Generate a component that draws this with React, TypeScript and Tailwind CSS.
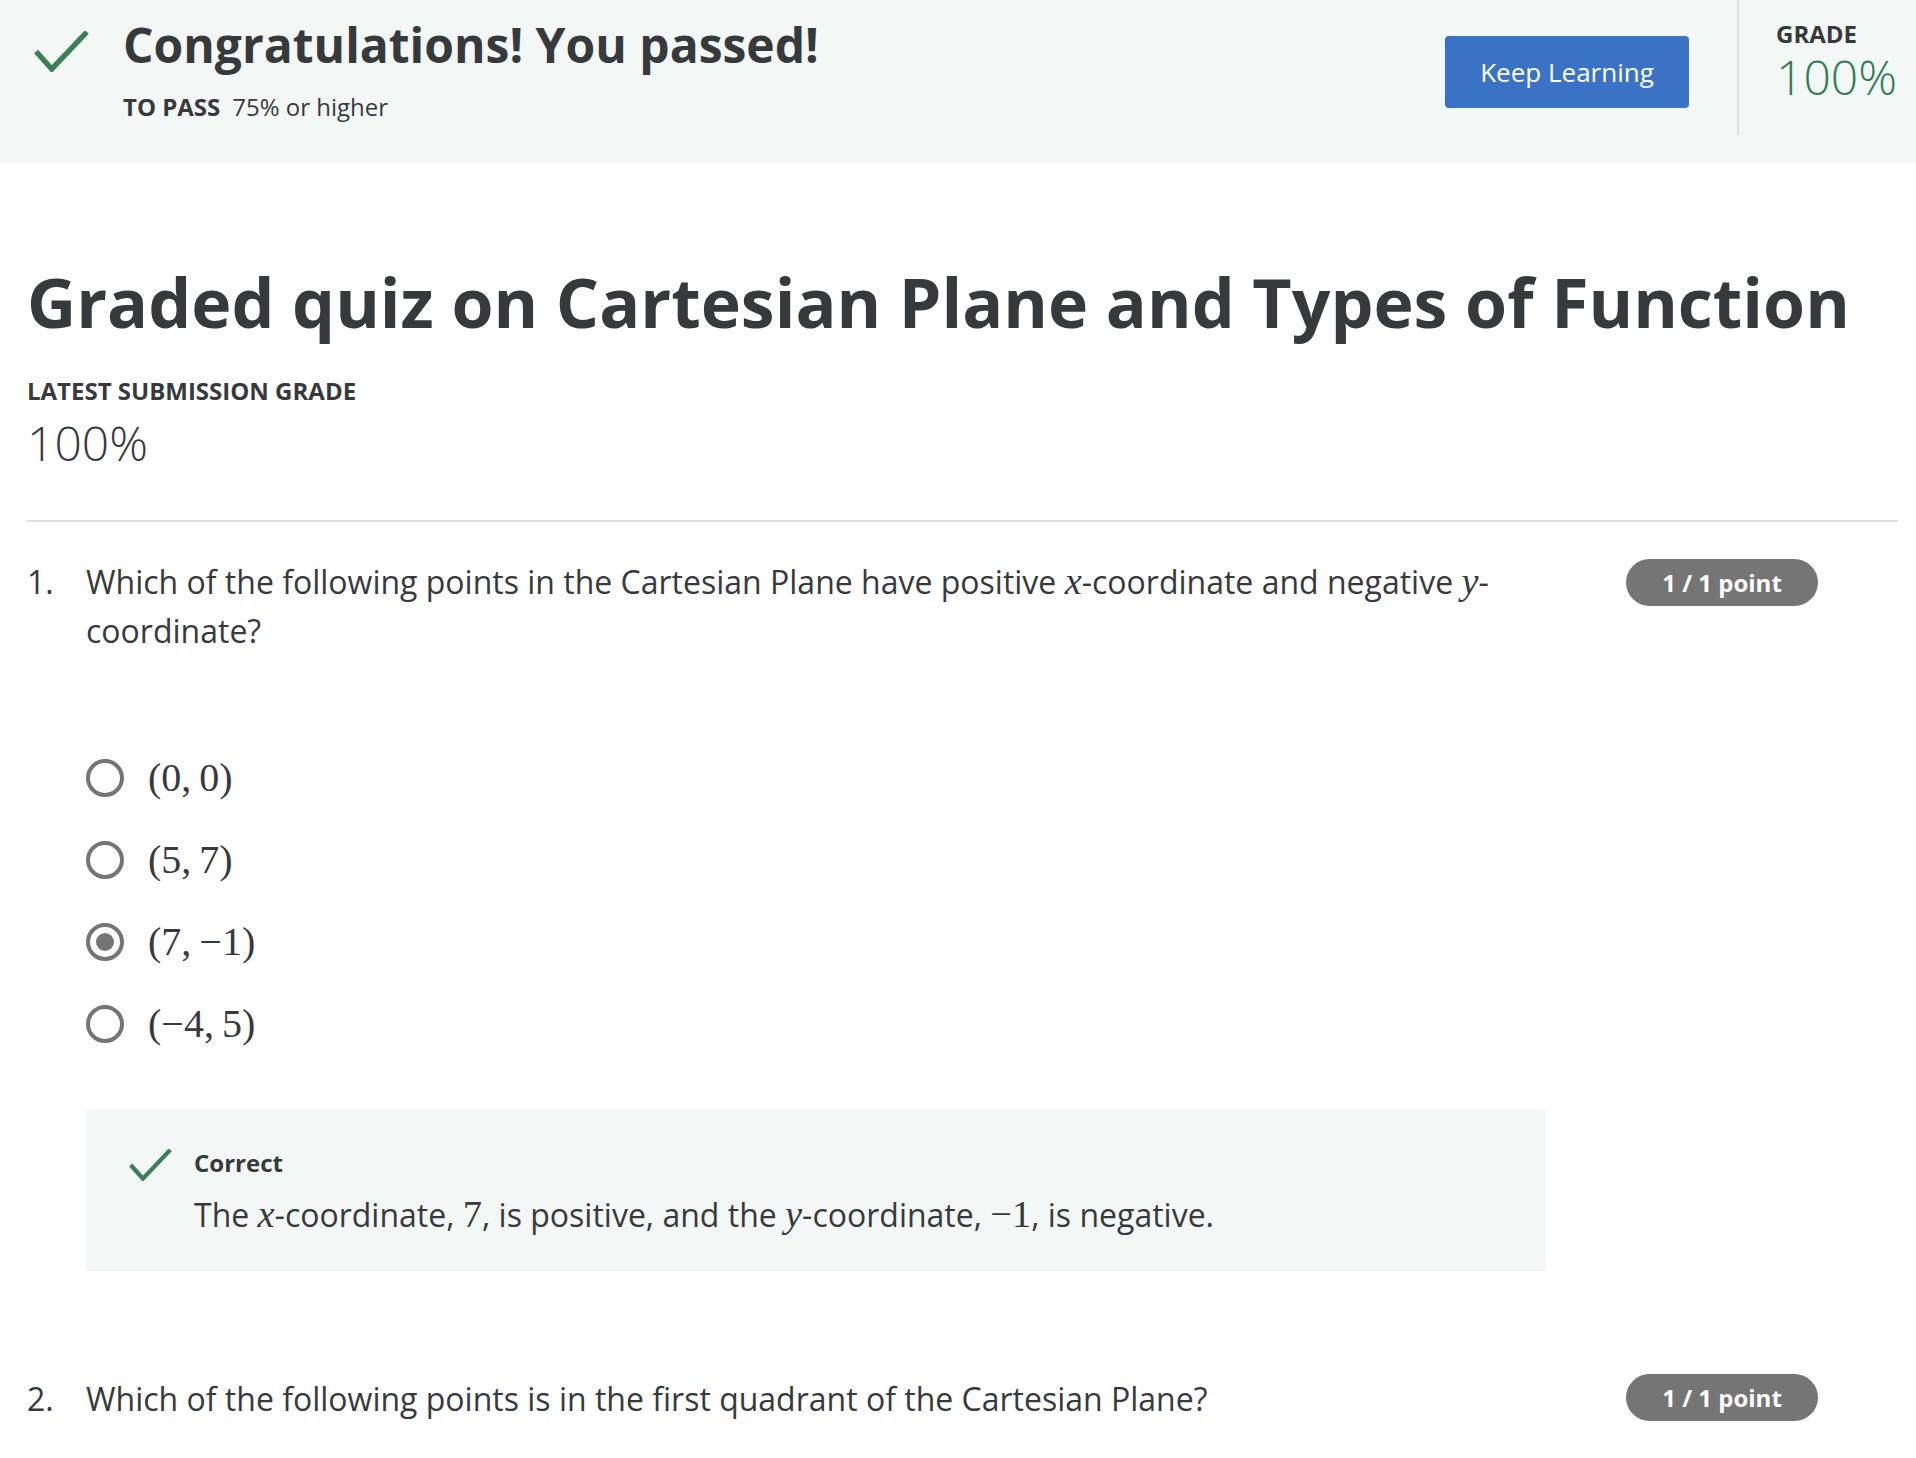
import React from "react";

const M = ({ children, i }: { children: React.ReactNode; i?: boolean }) => (
  <span className={"font-['Liberation_Serif',serif] text-[1.2em] leading-none " + (i ? "italic" : "")}>{children}</span>
);

function Check({ className }: { className?: string }) {
  return (
    <svg className={className} viewBox="0 0 56 42" fill="none">
      <path d="M2 21 L18 39 L54 1" stroke="#3a7f55" strokeWidth="5.5" />
    </svg>
  );
}

function Pill() {
  return (
    <div className="flex h-[47px] w-[192px] shrink-0 items-center justify-center rounded-full bg-[#757575] text-[24px] font-bold text-white">
      1 / 1 point
    </div>
  );
}

function Radio({ checked }: { checked?: boolean }) {
  return (
    <div className="flex h-[38px] w-[38px] shrink-0 items-center justify-center rounded-full border-[4px] border-[#757575]">
      {checked && <div className="h-[18px] w-[18px] rounded-full bg-[#757575]" />}
    </div>
  );
}

export default function App() {
  const options: { label: React.ReactNode; checked?: boolean }[] = [
    { label: "(0,\u20090)" },
    { label: "(5,\u20097)" },
    { label: "(7,\u2009\u22121)", checked: true },
    { label: "(\u22124,\u20095)" },
  ];
  return (
    <div className="min-h-[1458px] w-[1916px] bg-white font-['Open_Sans',sans-serif] text-[#373a3c]">
      <header className="flex h-[163px] bg-[#f3f8f6]">
        <div className="flex items-start pl-[34px]">
          <Check className="mt-[31px] h-[41px] w-[55px]" />
          <div className="ml-[34px] pt-[17px]">
            <h1 className="text-[48px] font-bold leading-[56px]">Congratulations! You passed!</h1>
            <div className="mt-[20px] text-[24px] leading-[28px]">
              <span className="font-bold">TO PASS</span>
              <span className="ml-[12px]">75% or higher</span>
            </div>
          </div>
        </div>
        <div className="flex-1" />
        <div className="pt-[36px]">
          <button className="flex h-[72px] w-[244px] items-center justify-center rounded-[4px] bg-[#3a73c6] text-[26px] text-white">
            Keep Learning
          </button>
        </div>
        <div className="ml-[48px] h-[135px] w-[2px] bg-[#e1e1e1]" />
        <div className="ml-[37px] w-[140px] pt-[19px]">
          <div className="text-[24px] font-bold leading-[30px]">GRADE</div>
          <div className="text-[48px] font-light leading-[56px] text-[#2f7d52]">100%</div>
        </div>
      </header>

      <main className="pl-[27px] pr-[18px]">
        <h2 className="pt-[99px] text-[68px] font-bold leading-[80px]">
          Graded quiz on Cartesian Plane and Types of Function
        </h2>
        <div className="mt-[33px] text-[24px] font-bold leading-[32px]">LATEST SUBMISSION GRADE</div>
        <div className="mt-[6px] text-[48px] font-light leading-[60px]">100%</div>
        <div className="mt-[47px] h-[2px] bg-[#e1e1e1]" />

        <section className="mt-[35px] flex">
          <div className="w-[59px] text-[32px] leading-[49px]">1.</div>
          <div className="w-[1460px]">
            <p className="text-[32px] leading-[49px]">
              Which of the following points in the Cartesian Plane have positive <M i>x</M>-coordinate and
              negative <M i>y</M>-coordinate?
            </p>
            <div className="mt-[104px] flex flex-col gap-[44px]">
              {options.map((o, idx) => (
                <div key={idx} className="flex items-center gap-[24px]">
                  <Radio checked={o.checked} />
                  <span className="font-['Liberation_Serif',serif] text-[40px] leading-[38px]">{o.label}</span>
                </div>
              ))}
            </div>
            <div className="mt-[66px] flex h-[162px] bg-[#f3f8f6] pl-[43px] pt-[40px]">
              <Check className="h-[32px] w-[43px] shrink-0" />
              <div className="ml-[22px]">
                <div className="text-[24px] font-bold leading-[28px]">Correct</div>
                <p className="mt-[18px] text-[32px] leading-[40px]">
                  The <M i>x</M>-coordinate, <M>7</M>, is positive, and the <M i>y</M>-coordinate, <M>{"\u22121"}</M>, is
                  negative.
                </p>
              </div>
            </div>
          </div>
          <div className="ml-[80px] pt-[2px]">
            <Pill />
          </div>
        </section>

        <section className="mt-[103px] flex">
          <div className="w-[59px] text-[32px] leading-[49px]">2.</div>
          <div className="w-[1460px]">
            <p className="text-[32px] leading-[49px]">
              Which of the following points is in the first quadrant of the Cartesian Plane?
            </p>
          </div>
          <div className="ml-[80px]">
            <Pill />
          </div>
        </section>
      </main>
    </div>
  );
}
